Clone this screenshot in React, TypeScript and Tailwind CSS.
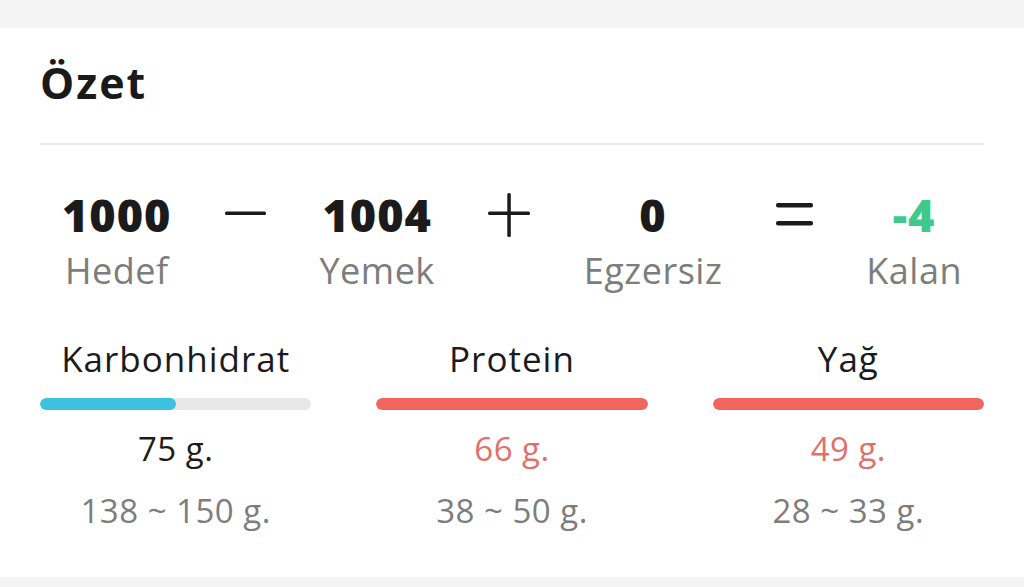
import React from "react";

const font = { fontFamily: '"Open Sans", "DejaVu Sans", sans-serif' };

type Stat = { value: string; label: string; green?: boolean };

function StatCol({ value, label, green }: Stat) {
  return (
    <div className="flex flex-col items-center">
      <div
        className={`text-[45px] font-extrabold leading-none tracking-[1px] ${
          green ? "text-[#3fca8b]" : "text-[#1b1b1b]"
        }`}
      >
        {value}
      </div>
      <div className="mt-[16px] text-[36px] leading-none tracking-[0.5px] text-[#7d7d7d]">
        {label}
      </div>
    </div>
  );
}

function Minus() {
  return (
    <svg width="41" height="45" viewBox="0 0 41 45" className="self-start">
      <rect x="0" y="19.5" width="41" height="3.5" rx="1.5" fill="#1b1b1b" />
    </svg>
  );
}

function Plus() {
  return (
    <svg width="42" height="45" viewBox="0 0 42 45" className="self-start">
      <rect x="0" y="19.5" width="42" height="3.5" rx="1.5" fill="#1b1b1b" />
      <rect x="19.3" y="1" width="3.5" height="44" rx="1.5" fill="#1b1b1b" />
    </svg>
  );
}

function Equals() {
  return (
    <svg width="37" height="45" viewBox="0 0 37 45" className="self-start">
      <rect x="0" y="11" width="37" height="4.5" rx="2" fill="#1b1b1b" />
      <rect x="0" y="29" width="37" height="4.5" rx="2" fill="#1b1b1b" />
    </svg>
  );
}

type Macro = {
  name: string;
  pct: number;
  bar: string;
  amount: string;
  over?: boolean;
  range: string;
};

const macros: Macro[] = [
  { name: "Karbonhidrat", pct: 50, bar: "bg-[#3cc1e1]", amount: "75 g.", range: "138 ~ 150 g." },
  { name: "Protein", pct: 100, bar: "bg-[#f2665f]", amount: "66 g.", over: true, range: "38 ~ 50 g." },
  { name: "Yağ", pct: 100, bar: "bg-[#f2665f]", amount: "49 g.", over: true, range: "28 ~ 33 g." },
];

function MacroCol({ m }: { m: Macro }) {
  return (
    <div className="flex flex-col items-center">
      <div className="text-[35px] leading-none tracking-[1px] text-[#1b1b1b]">{m.name}</div>
      <div className="mt-[22px] h-[12px] w-full overflow-hidden rounded-full bg-[#e8e8e8]">
        <div className={`h-full rounded-full ${m.bar}`} style={{ width: `${m.pct}%` }} />
      </div>
      <div
        className={`mt-[22px] text-[33px] leading-none tracking-[0.5px] ${
          m.over ? "text-[#e1706b]" : "text-[#1b1b1b]"
        }`}
      >
        {m.amount}
      </div>
      <div className="mt-[29px] text-[33px] leading-none tracking-[0.5px] text-[#7d7d7d]">
        {m.range}
      </div>
    </div>
  );
}

export default function App() {
  return (
    <div className="h-[587px] overflow-hidden bg-[#f4f4f4] pt-[28px]" style={font}>
      <div className="h-[549px] bg-white px-10">
        <h1 className="pt-[33px] text-[43px] font-bold leading-none tracking-[2px] text-[#1a1a1a]">
          Özet
        </h1>
        <div className="mt-[39px] h-[2px] bg-[#ebebeb]" />

        <div className="mt-[47px] flex items-start justify-between px-[22px]">
          <StatCol value="1000" label="Hedef" />
          <Minus />
          <StatCol value="1004" label="Yemek" />
          <Plus />
          <StatCol value="0" label="Egzersiz" />
          <Equals />
          <StatCol value="-4" label="Kalan" green />
        </div>

        <div className="mt-[52px] grid grid-cols-3 gap-[65px]">
          {macros.map((m) => (
            <MacroCol key={m.name} m={m} />
          ))}
        </div>
      </div>
    </div>
  );
}
